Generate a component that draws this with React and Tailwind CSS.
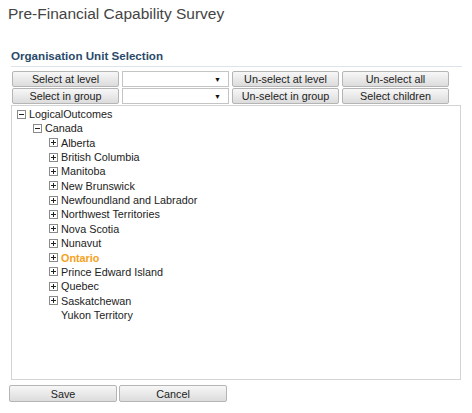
import React from 'react';

const provinces = [
  { name: 'Alberta', kids: true },
  { name: 'British Columbia', kids: true },
  { name: 'Manitoba', kids: true },
  { name: 'New Brunswick', kids: true },
  { name: 'Newfoundland and Labrador', kids: true },
  { name: 'Northwest Territories', kids: true },
  { name: 'Nova Scotia', kids: true },
  { name: 'Nunavut', kids: true },
  { name: 'Ontario', kids: true, selected: true },
  { name: 'Prince Edward Island', kids: true },
  { name: 'Quebec', kids: true },
  { name: 'Saskatchewan', kids: true },
  { name: 'Yukon Territory', kids: false },
];

function Toggle({ open }) {
  return (
    <svg width="9" height="9" viewBox="0 0 9 9" className="shrink-0">
      <rect x="0.5" y="0.5" width="8" height="8" fill="#fff" stroke="#8a8a8a" />
      <path d="M2 4.5h5" stroke="#222" strokeWidth="1" />
      {!open && <path d="M4.5 2v5" stroke="#222" strokeWidth="1" />}
    </svg>
  );
}

function Btn({ children, className = '' }) {
  return (
    <button
      className={`h-[16px] rounded-[2px] border border-[#b5b5b5] bg-gradient-to-b from-[#f7f7f7] to-[#dcdcdc] text-[10.8px] leading-[14px] text-[#222] ${className}`}
    >
      {children}
    </button>
  );
}

function Drop() {
  return (
    <div className="flex h-[16px] items-center justify-end border border-[#c4c4c4] bg-white pr-[7px]">
      <span className="text-[7px] leading-none text-[#111]">▼</span>
    </div>
  );
}

function Row({ indent, open, toggle = true, children, selected }) {
  return (
    <div className="flex h-[14.35px] items-center" style={{ paddingLeft: indent }}>
      {toggle ? <Toggle open={open} /> : <span className="w-[9px] shrink-0" />}
      <span
        className={`ml-[3px] whitespace-nowrap text-[10.8px] ${selected ? 'font-bold text-[#f7a11a]' : 'text-[#222]'}`}
      >
        {children}
      </span>
    </div>
  );
}

export default function App() {
  return (
    <div className="min-h-[413px] w-[472px] bg-white font-['Liberation_Sans',Arial,sans-serif]">
      <h1 className="pl-[8px] pt-[5px] text-[15.5px] leading-[18px] text-[#444]">Pre-Financial Capability Survey</h1>

      <div className="ml-[11px] mt-[26px] w-[451px]">
        <h2 className="border-b border-[#dde3ea] pb-[3px] text-[11.6px] font-bold leading-[14px] text-[#2a4a6b]">
          Organisation Unit Selection
        </h2>
        <div className="mt-[4px] grid grid-cols-[107px_107px_107px_107px] gap-x-[3px] gap-y-[1px] pl-[1px]">
          <Btn>Select at level</Btn>
          <Drop />
          <Btn>Un-select at level</Btn>
          <Btn>Un-select all</Btn>
          <Btn>Select in group</Btn>
          <Drop />
          <Btn>Un-select in group</Btn>
          <Btn>Select children</Btn>
        </div>
        <div className="mt-[1px] h-[275px] w-[450px] border border-[#d4d4d4] pt-[1px]">
          <Row indent={5} open>LogicalOutcomes</Row>
          <Row indent={21} open>Canada</Row>
          {provinces.map((p) => (
            <Row key={p.name} indent={37} toggle={p.kids} selected={p.selected}>
              {p.name}
            </Row>
          ))}
        </div>
      </div>

      <div className="ml-[9px] mt-[5px] flex gap-[2px]">
        <Btn className="h-[17px] w-[108px]">Save</Btn>
        <Btn className="h-[17px] w-[108px]">Cancel</Btn>
      </div>
    </div>
  );
}
